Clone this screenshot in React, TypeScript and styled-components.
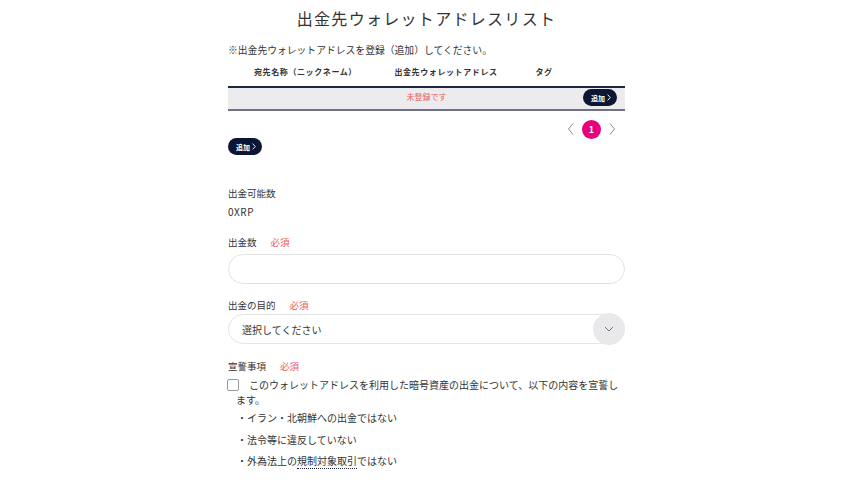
import React from "react";
import styled, { createGlobalStyle } from "styled-components";

const Global = createGlobalStyle`
  html, body { margin: 0; padding: 0; background: #fff; }
  body { font-family: "Noto Sans CJK JP", "Noto Sans", sans-serif; color: #333; }
  * { box-sizing: border-box; }
`;

const Page = styled.div`
  width: 397px;
  margin: 0 auto;
  padding-bottom: 20px;
`;

const Title = styled.h1`
  margin: 6px 0 0;
  font-size: 16px;
  line-height: 24px;
  letter-spacing: 1.3px;
  font-weight: 400;
  text-align: center;
  color: #333;
`;

const Note = styled.p`
  margin: 13px 0 0;
  font-size: 9.8px;
  line-height: 14px;
`;

const Grid = styled.div`
  display: grid;
  grid-template-columns: 155px 126px 70px 1fr;
  align-items: center;
`;

const HeadRow = styled(Grid)`
  height: 29px;
`;

const HeadCell = styled.div`
  font-size: 8px;
  font-weight: 700;
  letter-spacing: 0.6px;
  text-align: center;
  color: #333;
`;

const BodyRow = styled.div`
  position: relative;
  height: 25px;
  border-top: 2px solid #1e2745;
  border-bottom: 2px solid #6e7184;
  background: #ececef;
  display: flex;
  align-items: center;
  justify-content: center;
`;

const Empty = styled.span`
  font-size: 8px;
  line-height: 10px;
  color: #f05a5a;
  margin-top: -3px;
`;

const PillButton = styled.button`
  height: 17px;
  padding: 0 6px 0 8px;
  border: none;
  border-radius: 9px;
  background: #0b1634;
  color: #fff;
  font-family: inherit;
  font-size: 7px;
  font-weight: 700;
  display: inline-flex;
  align-items: center;
  gap: 2px;
  cursor: pointer;
`;

const RowAction = styled.div`
  position: absolute;
  right: 8px;
  top: 1px;
  display: flex;
`;

const Pager = styled.div`
  margin-top: 9px;
  height: 18px;
  display: flex;
  justify-content: flex-end;
  align-items: center;
  gap: 6px;
  padding-right: 8px;
`;

const PageCurrent = styled.span`
  width: 19px;
  height: 19px;
  border-radius: 50%;
  background: #e6007e;
  color: #fff;
  font-size: 9px;
  font-weight: 700;
  display: flex;
  align-items: center;
  justify-content: center;
`;

const Arrow = styled.svg`
  width: 10px;
  height: 14px;
`;

const AddRow = styled.div`
  display: flex;
`;

const Field = styled.div<{ $mt: number }>`
  margin-top: ${(p) => p.$mt}px;
`;

const Label = styled.div`
  font-size: 9.5px;
  line-height: 14px;
  display: flex;
  align-items: center;
`;

const Required = styled.span`
  color: #f05a5a;
  margin-left: 14px;
`;

const Value = styled.div`
  margin-top: 5px;
  font-size: 10px;
  line-height: 14px;
  letter-spacing: 0.5px;
`;

const Input = styled.input`
  display: block;
  width: 100%;
  height: 30px;
  margin-top: 5px;
  border: 1px solid #e2e2e2;
  border-radius: 15px;
  background: #fff;
  outline: none;
`;

const Select = styled.div`
  position: relative;
  height: 30px;
  margin-top: 2px;
  border: 1px solid #e4e4e4;
  border-radius: 15px;
  display: flex;
  align-items: center;
  padding-left: 13px;
  font-size: 10px;
  color: #333;
`;

const SelectButton = styled.span`
  position: absolute;
  right: -1px;
  top: -2px;
  width: 32px;
  height: 32px;
  border-radius: 50%;
  background: #e9e9ec;
  display: flex;
  align-items: center;
  justify-content: center;
`;

const Oath = styled.p`
  margin: 4px 0 0;
  padding-left: 8px;
  font-size: 10px;
  line-height: 15px;
`;

const Box = styled.span`
  display: inline-block;
  width: 12px;
  height: 12px;
  margin-left: -9px;
  margin-right: 10px;
  border: 1px solid #9a9a9a;
  border-radius: 2px;
  vertical-align: -2px;
`;

const List = styled.ul`
  list-style: none;
  margin: 4px 0 0;
  padding: 0 0 0 9px;
`;

const Item = styled.li`
  font-size: 10px;
  line-height: 14px;
  margin-bottom: 7.5px;
`;

const Term = styled.span`
  border-bottom: 1px dotted #1e2745;
`;

const Chevron = ({ dir }: { dir: "left" | "right" }) => (
  <Arrow viewBox="0 0 10 14">
    <path
      d={dir === "left" ? "M7 1.5 L2.5 7 L7 12.5" : "M3 1.5 L7.5 7 L3 12.5"}
      fill="none"
      stroke="#8a8a8a"
      strokeWidth="1"
    />
  </Arrow>
);

const SmallArrow = () => (
  <svg width="4" height="7" viewBox="0 0 4 7">
    <path d="M0.6 0.6 L3.3 3.5 L0.6 6.4" fill="none" stroke="#fff" strokeWidth="0.9" />
  </svg>
);

export default function App() {
  return (
    <>
      <Global />
      <Page>
        <Title>出金先ウォレットアドレスリスト</Title>
        <Note>※出金先ウォレットアドレスを登録（追加）してください。</Note>
        <HeadRow>
          <HeadCell>宛先名称（ニックネーム）</HeadCell>
          <HeadCell>出金先ウォレットアドレス</HeadCell>
          <HeadCell>タグ</HeadCell>
          <div />
        </HeadRow>
        <BodyRow>
          <Empty>未登録です</Empty>
          <RowAction>
            <PillButton>
              追加
              <SmallArrow />
            </PillButton>
          </RowAction>
        </BodyRow>
        <Pager>
          <Chevron dir="left" />
          <PageCurrent>1</PageCurrent>
          <Chevron dir="right" />
        </Pager>
        <AddRow>
          <PillButton>
            追加
            <SmallArrow />
          </PillButton>
        </AddRow>

        <Field $mt={31}>
          <Label>出金可能数</Label>
          <Value>0XRP</Value>
        </Field>

        <Field $mt={16}>
          <Label>
            出金数<Required>必須</Required>
          </Label>
          <Input type="text" />
        </Field>

        <Field $mt={14}>
          <Label>
            出金の目的<Required>必須</Required>
          </Label>
          <Select>
            選択してください
            <SelectButton>
              <svg width="10" height="6" viewBox="0 0 10 6">
                <path d="M1 1 L5 5 L9 1" fill="none" stroke="#6a7090" strokeWidth="1" />
              </svg>
            </SelectButton>
          </Select>
        </Field>

        <Field $mt={15}>
          <Label>
            宣誓事項<Required>必須</Required>
          </Label>
          <Oath>
            <Box />
            このウォレットアドレスを利用した暗号資産の出金について、以下の内容を宣誓します。
          </Oath>
          <List>
            <Item>・イラン・北朝鮮への出金ではない</Item>
            <Item>・法令等に違反していない</Item>
            <Item>
              ・外為法上の<Term>規制対象取引</Term>ではない
            </Item>
          </List>
        </Field>
      </Page>
    </>
  );
}
